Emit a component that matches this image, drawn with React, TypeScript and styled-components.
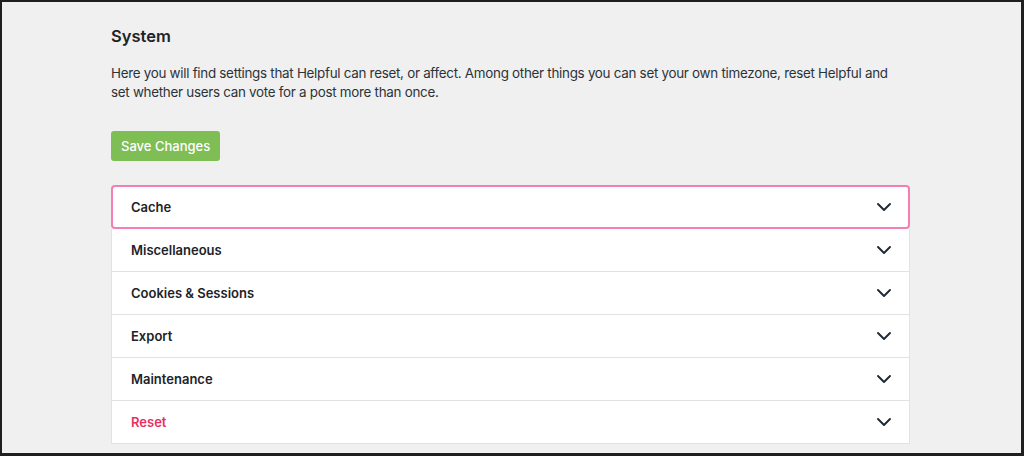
import styled, { createGlobalStyle } from "styled-components";

const GlobalStyle = createGlobalStyle`
  html, body {
    margin: 0;
    padding: 0;
    background: #f0f0f1;
  }
  * { box-sizing: border-box; }
`;

const Frame = styled.div`
  width: 1024px;
  height: 456px;
  border-style: solid;
  border-color: #1f1f1f;
  border-width: 2px 3px 3px 2px;
  background: #f0f0f1;
  overflow: hidden;
  font-family: Inter, "Liberation Sans", sans-serif;
  color: #1d2327;
`;

const Content = styled.div`
  width: 799px;
  margin-left: 109px;
  padding-top: 23px;
  display: flex;
  flex-direction: column;
`;

const Title = styled.h2`
  margin: 0;
  font-size: 16.5px;
  font-weight: 600;
  line-height: 22px;
  color: #1d2327;
`;

const Intro = styled.p`
  margin: 17px 0 0;
  font-size: 13.4px;
  letter-spacing: -0.28px;
  line-height: 19px;
  color: #2c3338;
  width: 788px;
`;

const SaveButton = styled.button`
  margin-top: 29px;
  align-self: flex-start;
  height: 30px;
  padding: 0 10px;
  border: none;
  border-radius: 3px;
  background: #7fbd55;
  color: #fff;
  font-family: inherit;
  font-size: 13px;
  font-weight: 500;
`;

const Accordion = styled.div`
  margin-top: 24px;
  display: flex;
  flex-direction: column;
`;

const Row = styled.div<{ $active?: boolean }>`
  height: ${(p) => (p.$active ? 44 : 43)}px;
  display: flex;
  align-items: center;
  justify-content: space-between;
  background: #fff;
  padding: 0 ${(p) => (p.$active ? 16 : 17)}px 0 ${(p) => (p.$active ? 18 : 19)}px;
  border: ${(p) => (p.$active ? "2px solid #f47fb4" : "1px solid #e2e2e4")};
  border-top-width: ${(p) => (p.$active ? 2 : 0)}px;
  border-radius: ${(p) => (p.$active ? "4px" : "0")};
  &:last-child {
    border-bottom: 1px solid #e2e2e4;
  }
`;

const Label = styled.span<{ $danger?: boolean }>`
  font-size: 13px;
  font-weight: 600;
  color: ${(p) => (p.$danger ? "#e8315f" : "#1d2327")};
`;

const Chevron = () => (
  <svg width="16" height="10" viewBox="0 0 16 10" fill="none">
    <path d="M2 2l6 6 6-6" stroke="#1e2933" strokeWidth="1.9" strokeLinecap="round" strokeLinejoin="round" />
  </svg>
);

const sections = [
  { name: "Cache", active: true },
  { name: "Miscellaneous" },
  { name: "Cookies & Sessions" },
  { name: "Export" },
  { name: "Maintenance" },
  { name: "Reset", danger: true },
];

export default function App() {
  return (
    <>
      <GlobalStyle />
      <Frame>
        <Content>
          <Title>System</Title>
          <Intro>
            Here you will find settings that Helpful can reset, or affect. Among other things you can set your own
            timezone, reset Helpful and set whether users can vote for a post more than once.
          </Intro>
          <SaveButton>Save Changes</SaveButton>
          <Accordion>
            {sections.map((s) => (
              <Row key={s.name} $active={s.active}>
                <Label $danger={s.danger}>{s.name}</Label>
                <Chevron />
              </Row>
            ))}
          </Accordion>
        </Content>
      </Frame>
    </>
  );
}
